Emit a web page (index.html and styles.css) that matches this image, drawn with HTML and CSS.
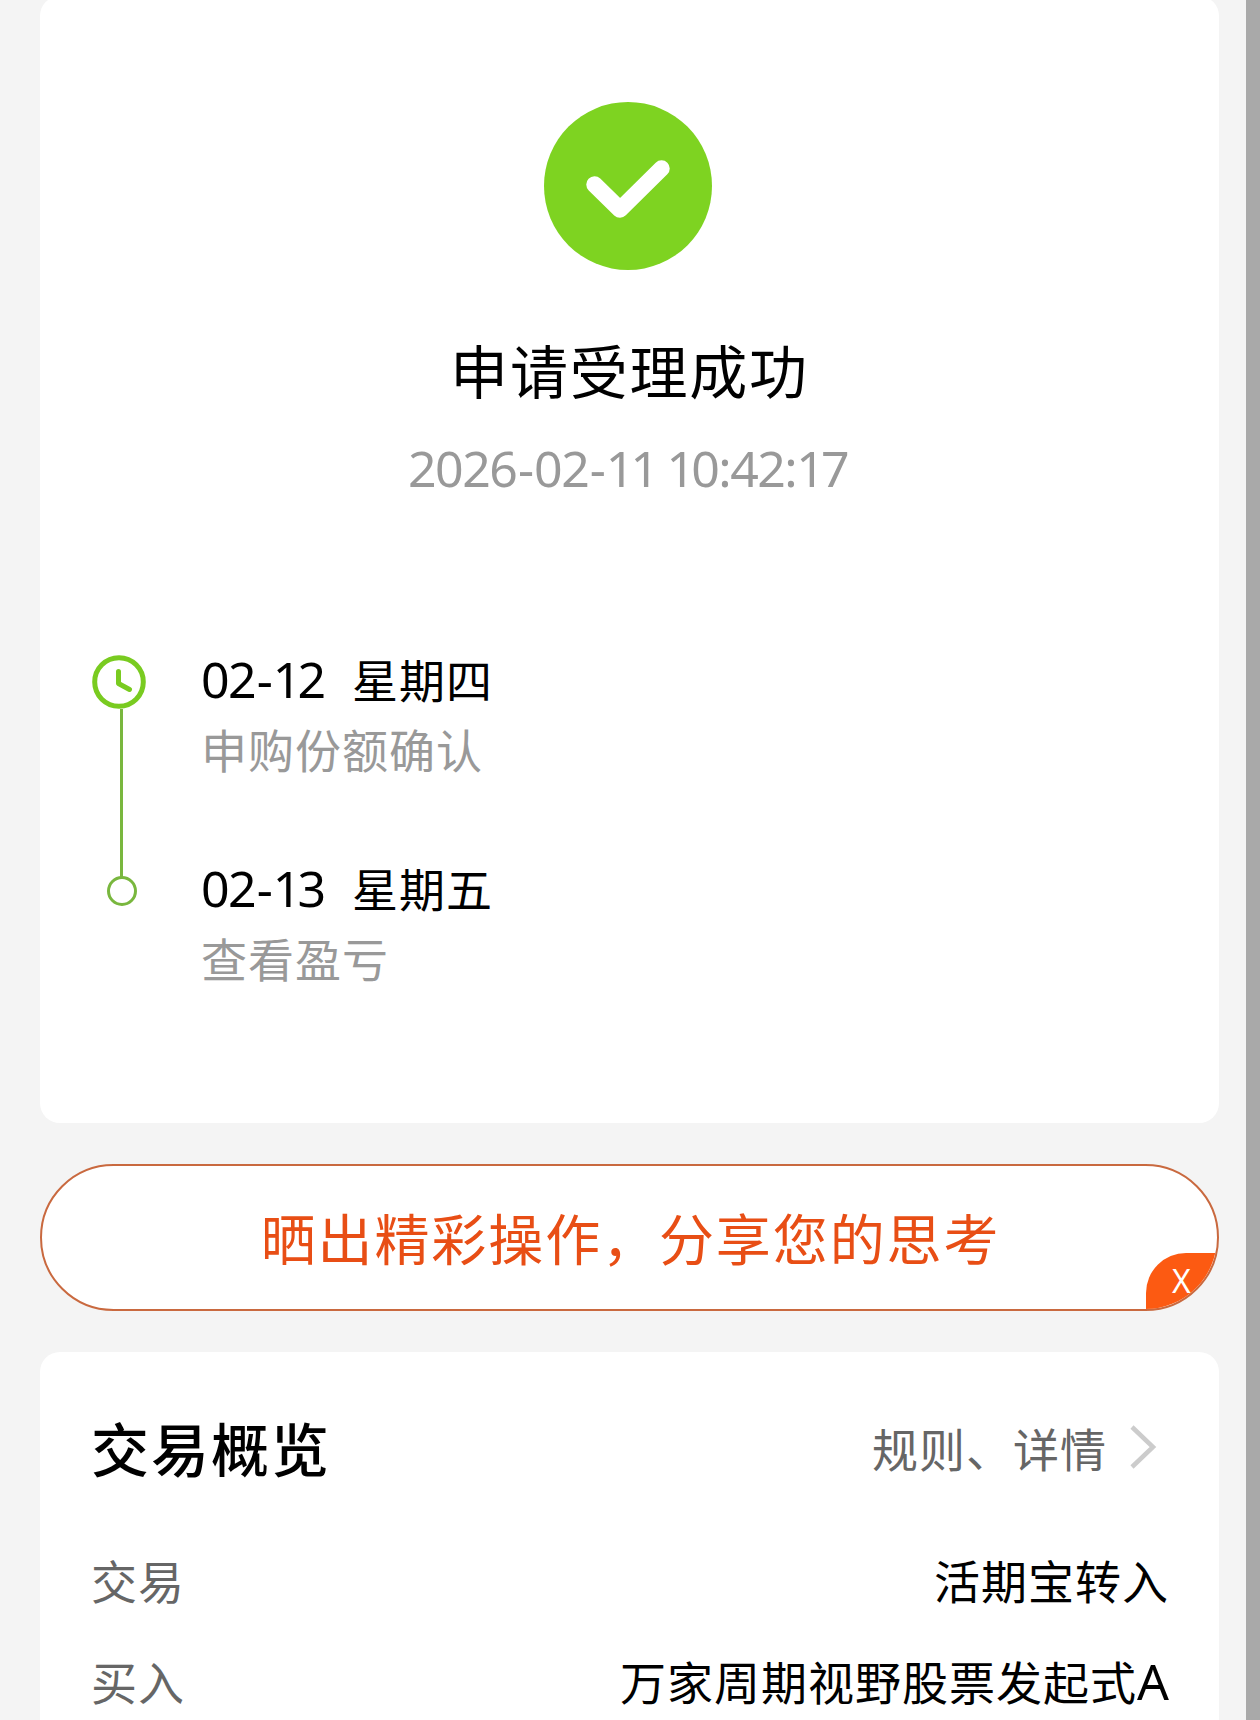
FILE: index.html
```html
<!DOCTYPE html>
<html lang="zh-CN">
<head>
<meta charset="utf-8">
<title>申请受理成功</title>
<link rel="stylesheet" href="styles.css">
</head>
<body>
<main class="page">
  <section class="card result">
    <svg class="success" viewBox="0 0 168 168" aria-hidden="true">
      <circle cx="84" cy="84" r="84" fill="#7ed321"/>
      <path d="M50.5 82.5 76 107.500 117.500 66.500" fill="none" stroke="#fff" stroke-width="16.500" stroke-linecap="round" stroke-linejoin="round"/>
    </svg>
    <h1 class="title">申请受理成功</h1>
    <p class="timestamp">2026<span class="dash">-</span>02<span class="dash">-</span><span class="tight">11</span> <span class="tight">1</span>0:42:<span class="tight">1</span>7</p>
    <ol class="timeline">
      <li class="step">
        <span class="marker">
          <svg class="clock" viewBox="0 0 54 54" aria-hidden="true">
            <circle cx="27" cy="27" r="24.300" fill="#fff" stroke="#79cb20" stroke-width="5"/>
            <path d="M26.500 16.500V28.500L37.500 34.500" fill="none" stroke="#79cb20" stroke-width="5" stroke-linecap="round" stroke-linejoin="round"/>
          </svg>
          <span class="line"></span>
        </span>
        <div class="detail">
          <p class="day"><span class="date">02<span class="dash">-</span><span class="tight">1</span>2</span><span>星期四</span></p>
          <p class="note">申购份额确认</p>
        </div>
      </li>
      <li class="step">
        <span class="marker"><span class="dot"></span></span>
        <div class="detail">
          <p class="day"><span class="date">02<span class="dash">-</span><span class="tight">1</span>3</span><span>星期五</span></p>
          <p class="note">查看盈亏</p>
        </div>
      </li>
    </ol>
  </section>

  <section class="share">
    <span class="share-text">晒出精彩操作，分享您的思考</span>
    <span class="close">X</span>
  </section>

  <section class="card overview">
    <header class="overview-head">
      <h2 class="heading">交易概览</h2>
      <a class="rules">规则、详情
        <svg class="chevron" viewBox="0 0 28 46" aria-hidden="true"><path d="M3 3 24 23 3 43" fill="none" stroke="#ccc" stroke-width="4.500"/></svg>
      </a>
    </header>
    <div class="row"><span class="label">交易</span><span class="value">活期宝转入</span></div>
    <div class="row"><span class="label">买入</span><span class="value">万家周期视野股票发起式<span class="latin">A</span></span></div>
  </section>
</main>
</body>
</html>
```
FILE: styles.css
```css
* { box-sizing: border-box; }

html, body, h1, h2, p, ol { margin: 0; padding: 0; }

html { overflow: hidden; }

body {
  font-family: "Noto Sans CJK SC", sans-serif;
  color: #000;
}

.page {
  display: flex;
  flex-direction: column;
  height: 1720px;
  overflow: hidden;
  padding: 0 27px 0 40px;
  border-right: 14px solid #a9a9a9;
  background: #f4f4f4;
}

.card {
  flex: none;
  border-radius: 20px;
  background: #fff;
}

.result {
  display: flex;
  flex-direction: column;
  align-items: center;
  height: 1127px;
  margin-top: -4px;
  padding-top: 106px;
}

.success { width: 168px; height: 168px; margin-right: 3px; }

.title {
  margin-top: 61px;
  font-size: 58px;
  font-weight: 400;
  line-height: 76px;
  letter-spacing: 1.8px;
}

.timestamp {
  margin-top: 25px;
  padding-right: 3px;
  color: #999;
  font-family: "Noto Sans", sans-serif;
  font-size: 50px;
  line-height: 72px;
  letter-spacing: -1.5px;
  white-space: nowrap;
}

.tight { letter-spacing: -4px; }

.dash { margin: 0 1.500px; }

.timeline {
  align-self: stretch;
  margin-top: 152px;
  padding-left: 52px;
  list-style: none;
}

.step {
  display: flex;
  height: 208.500px;
}

.marker {
  display: flex;
  flex-direction: column;
  align-items: center;
  width: 59px;
}

.clock { flex: none; width: 54px; height: 54px; margin: -1px 5px 0 0; }

.line { flex: 1; width: 3px; margin-bottom: -12px; background: #79b73e; }

.dot {
  width: 30px;
  height: 30px;
  margin-top: 11px;
  border: 3px solid #79b73e;
  border-radius: 50%;
}

.detail { padding-left: 50px; }

.day {
  display: flex;
  gap: 28px;
  height: 60px;
  margin-top: -8px;
  font-size: 46px;
  line-height: 60px;
  letter-spacing: 1px;
}

.date {
  width: 123px;
  font-family: "Noto Sans", sans-serif;
  font-size: 50px;
  line-height: 62px;
  letter-spacing: -1.500px;
  white-space: nowrap;
}

.note {
  margin-top: 10px;
  color: #999;
  font-size: 46px;
  line-height: 60px;
  letter-spacing: 1px;
}

.share {
  position: relative;
  display: flex;
  align-items: center;
  justify-content: center;
  flex: none;
  height: 147px;
  margin: 41px 0;
  overflow: hidden;
  border: 2px solid #c9693f;
  border-radius: 74px;
  background: #fff;
  color: #e84e15;
}

.share-text {
  padding: 0 0 4px 2px;
  font-size: 55px;
  line-height: 80px;
  letter-spacing: 1.900px;
}

.close {
  position: absolute;
  right: 0;
  bottom: 0;
  width: 71px;
  height: 56px;
  border-top-left-radius: 40px;
  background: #fc5a12;
  color: #fff;
  font-family: "Noto Sans", sans-serif;
  font-size: 32px;
  line-height: 56px;
  text-align: center;
}

.overview {
  height: 420px;
  padding: 0 50px 0 51px;
}

.overview-head {
  display: flex;
  align-items: center;
  justify-content: space-between;
  height: 176px;
  padding: 13px 12px 0 0;
}

.heading {
  font-size: 58px;
  font-weight: 500;
  line-height: 80px;
  letter-spacing: 2px;
}

.rules {
  display: flex;
  align-items: center;
  gap: 22px;
  color: #666;
  font-size: 46px;
  letter-spacing: 1px;
}

.chevron { width: 28px; height: 46px; }

.row {
  display: flex;
  align-items: center;
  justify-content: space-between;
  height: 101px;
  font-size: 46px;
  letter-spacing: 1px;
}

.label { color: #666; }

.latin {
  font-family: "Noto Sans", sans-serif;
  font-size: 50px;
  line-height: 1;
  letter-spacing: 0;
}
```
